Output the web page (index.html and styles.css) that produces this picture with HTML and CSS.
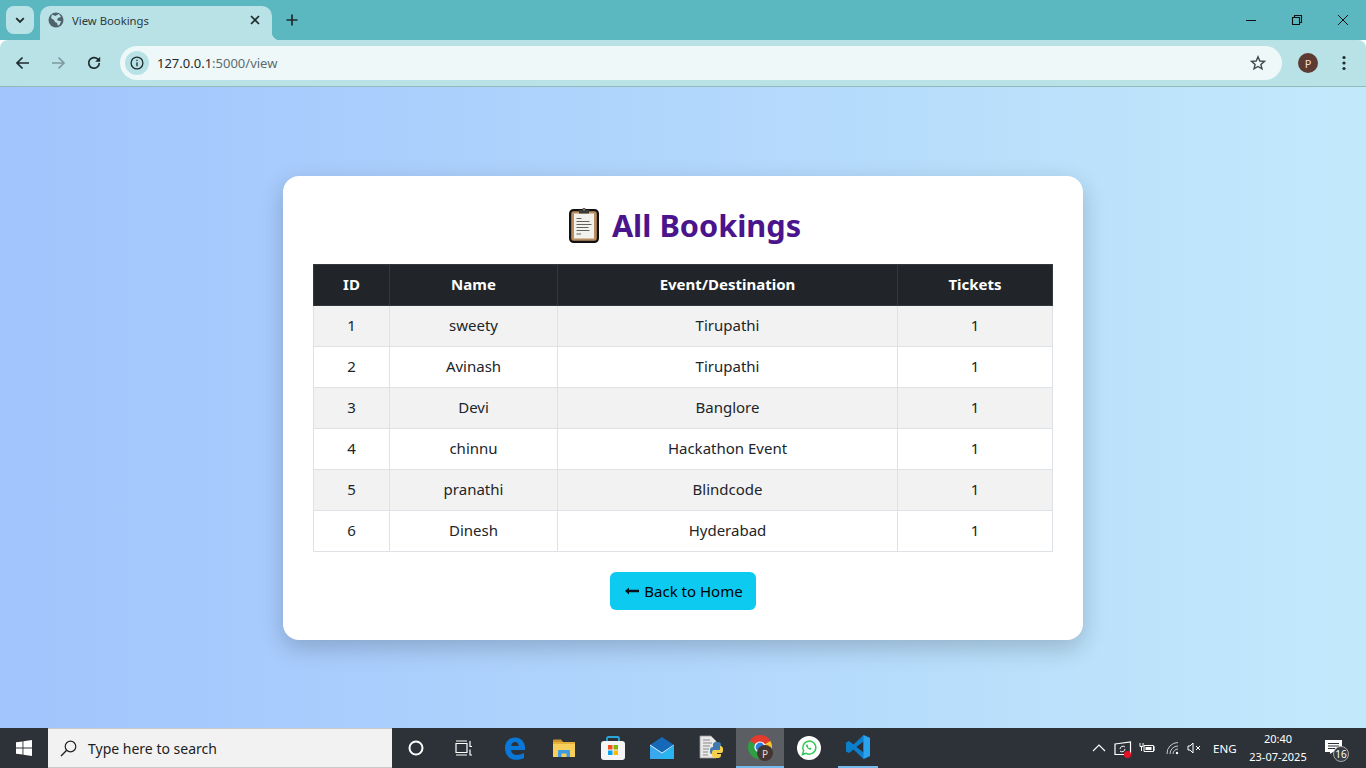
FILE: index.html
```html
<!DOCTYPE html>
<html lang="en">
<head>
    <meta charset="UTF-8">
    <meta name="viewport" content="width=device-width, initial-scale=1.0">
    <title>View Bookings</title>
    <link rel="stylesheet" href="styles.css">
</head>
<body>
    <!-- browser chrome -->
    <div class="tabstrip">
        <div class="tab-search">
            <svg width="12" height="12" viewBox="0 0 12 12"><path d="M2.200 4.200 6 8l3.800-3.800" fill="none" stroke="#1f2a2c" stroke-width="1.800"/></svg>
        </div>
        <div class="tab">
            <svg class="favicon" width="16" height="16" viewBox="0 0 16 16"><circle cx="8" cy="8" r="7.500" fill="#51636a"/><path d="M4 2.600 7.400 4 9 3l2-1 2 3-3 1-1 2 2 1 2 0-1 3-2 2-1-3-2-1-1-2-3-2z" fill="#b9e2e6"/></svg>
            <span class="tab-title">View Bookings</span>
            <svg class="tab-close" width="10" height="10" viewBox="0 0 10 10"><path d="M1 1l8 8M9 1l-8 8" stroke="#1f2a2c" stroke-width="1.700"/></svg>
        </div>
        <svg class="new-tab" width="12" height="12" viewBox="0 0 12 12"><path d="M6 .5v11M.5 6h11" stroke="#1f2a2c" stroke-width="1.700"/></svg>
        <div class="win-controls">
            <svg width="46" height="12" viewBox="0 0 46 12"><path d="M18 6.500h10" stroke="#111" stroke-width="1"/></svg>
            <svg width="46" height="12" viewBox="0 0 46 12"><path d="M18.500 3.500h7v7h-7zM20.500 3.500v-2h7v7h-2" fill="none" stroke="#111" stroke-width="1.100"/></svg>
            <svg width="46" height="12" viewBox="0 0 46 12"><path d="M18 1l10 10M28 1 18 11" stroke="#111" stroke-width="1"/></svg>
        </div>
    </div>
    <div class="toolbar">
        <svg class="nav-btn" width="16" height="16" viewBox="0 0 16 16"><path d="M14 8H2.500M7.500 2.500 2 8l5.500 5.500" fill="none" stroke="#1f2a2c" stroke-width="1.700"/></svg>
        <svg class="nav-btn" width="16" height="16" viewBox="0 0 16 16"><path d="M2 8h11.500M8.500 2.500 14 8l-5.500 5.500" fill="none" stroke="#7f9a9e" stroke-width="1.700"/></svg>
        <svg class="nav-btn" width="16" height="16" viewBox="0 0 16 16"><path d="M13.300 8A5.300 5.300 0 1 1 11.800 4.200L13.500 6" fill="none" stroke="#1f2a2c" stroke-width="1.700"/><path d="M14.200 1.800v5h-5z" fill="#1f2a2c"/></svg>
        <div class="omnibox">
            <span class="site-info">
                <svg width="14" height="14" viewBox="0 0 14 14"><circle cx="7" cy="7" r="5.900" fill="none" stroke="#1f2a2c" stroke-width="1.300"/><path d="M7 6.200v4M7 3.800v1.300" stroke="#1f2a2c" stroke-width="1.300"/></svg>
            </span>
            <span class="url">127.0.0.1<span class="url-path">:5000/view</span></span>
            <svg class="star" width="16" height="16" viewBox="0 0 16 16"><path d="M8 1.800 9.800 6l4.600.4-3.500 3 1.100 4.500L8 11.500l-4 2.400 1.100-4.500-3.500-3L6.200 6z" fill="none" stroke="#3c4a4d" stroke-width="1.400"/></svg>
        </div>
        <span class="avatar">P</span>
        <svg class="menu-dots" width="4" height="16" viewBox="0 0 4 16"><circle cx="2" cy="2.500" r="1.600" fill="#1f2a2c"/><circle cx="2" cy="8" r="1.600" fill="#1f2a2c"/><circle cx="2" cy="13.500" r="1.600" fill="#1f2a2c"/></svg>
    </div>

    <main class="page">
        <div class="card">
            <h2 class="heading">
                <svg class="clipboard" width="30" height="36" viewBox="0 0 30 36">
                    <rect x="1.100" y="3.100" width="27.800" height="31.800" rx="3.500" fill="#b98d60" stroke="#111" stroke-width="2.200"/>
                    <rect x="5" y="6.500" width="20" height="25" fill="#f2f1ec"/>
                    <path d="M10 6.500V3h3a2 2 0 0 1 4 0h3v3.500z" fill="#3a3a3a"/>
                    <circle cx="15" cy="2.800" r=".8" fill="#c9a27a"/>
                    <path d="M7.500 11.500h5M7.500 14.500h13M7.500 17.500h15M7.500 20.500h12M7.500 23.500h13M7.500 27h4.500" stroke="#606365" stroke-width="1.200"/>
                </svg>
                <span>All Bookings</span>
            </h2>
            <table class="bookings">
                <colgroup>
                    <col class="col-id"><col class="col-name"><col class="col-event"><col class="col-tickets">
                </colgroup>
                <thead>
                    <tr><th>ID</th><th>Name</th><th>Event/Destination</th><th>Tickets</th></tr>
                </thead>
                <tbody>
                    <tr><td>1</td><td>sweety</td><td>Tirupathi</td><td>1</td></tr>
                    <tr><td>2</td><td>Avinash</td><td>Tirupathi</td><td>1</td></tr>
                    <tr><td>3</td><td>Devi</td><td>Banglore</td><td>1</td></tr>
                    <tr><td>4</td><td>chinnu</td><td>Hackathon Event</td><td>1</td></tr>
                    <tr><td>5</td><td>pranathi</td><td>Blindcode</td><td>1</td></tr>
                    <tr><td>6</td><td>Dinesh</td><td>Hyderabad</td><td>1</td></tr>
                </tbody>
            </table>
            <a class="back-btn" href="#">
                <svg width="14" height="8" viewBox="0 0 14 8"><path d="M0 4 4 .5v2.300h10v2.400H4v2.300z" fill="#06141a"/></svg>
                <span>Back to Home</span>
            </a>
        </div>
    </main>

    <!-- windows taskbar -->
    <footer class="taskbar">
        <div class="start">
            <svg width="16" height="16" viewBox="0 0 16 16"><path d="M0 2.300 6.500 1.400v6.100H0zM7.400 1.300 16 0v7.500H7.400zM0 8.400h6.500v6.200L0 13.700zM7.400 8.400H16V16l-8.600-1.300z" fill="#fff"/></svg>
        </div>
        <div class="search">
            <svg width="17" height="17" viewBox="0 0 17 17"><circle cx="10.500" cy="6.500" r="5.300" fill="none" stroke="#222" stroke-width="1.200"/><path d="M6.700 10.300 1 16" stroke="#222" stroke-width="1.400"/></svg>
            <span>Type here to search</span>
        </div>
        <div class="task-item">
            <svg width="16" height="16" viewBox="0 0 16 16"><circle cx="8" cy="8" r="6.500" fill="none" stroke="#fff" stroke-width="2"/></svg>
        </div>
        <div class="task-item">
            <svg width="18" height="16" viewBox="0 0 18 16"><path d="M1 3.500h11v9H1zM1 1h11M1 15h11M15 1v5.500h2M15 9.500V15h2" fill="none" stroke="#fff" stroke-width="1.200"/></svg>
        </div>
        <div class="task-item task-first">
            <svg width="22" height="23" viewBox="0 0 22 23"><path d="M1 11C1 4.500 5.500.5 11 .5c6 0 10 4.200 10 10.500v2H7c.3 3.500 3 5 6 5 2.700 0 5-.8 7-2v5c-2 1.100-4.500 1.800-7.800 1.800C5.500 22.800 1 18 1 11zM7.200 9h7.500c0-2.500-1.500-4-3.600-4S7.500 6.500 7.200 9z" fill="#0a78d8"/></svg>
        </div>
        <div class="task-item">
            <svg width="22" height="18" viewBox="0 0 22 18"><path d="M0 1.500A1 1 0 0 1 1 .5h7l2 2.500H0z" fill="#c8952e"/><rect y="3" width="22" height="15" fill="#f7cf5c"/><path d="M0 3h22v2H0z" fill="#e5b13b"/><path d="M5 18v-6a1 1 0 0 1 1-1h10a1 1 0 0 1 1 1v6h-3.500v-3.500h-5V18z" fill="#3e9ce0"/></svg>
        </div>
        <div class="task-item">
            <svg width="24" height="24" viewBox="0 0 24 24"><path d="M6 6V2.500a1.500 1.500 0 0 1 1.500-1.500h9A1.500 1.500 0 0 1 18 2.500V6" fill="none" stroke="#2aa6dc" stroke-width="1.800"/><rect y="5" width="24" height="19" rx="3" fill="#f5f5f5"/><rect x="7" y="9" width="4.500" height="4.500" fill="#f25022"/><rect x="12.500" y="9" width="4.500" height="4.500" fill="#7fba00"/><rect x="7" y="14.500" width="4.500" height="4.500" fill="#00a4ef"/><rect x="12.500" y="14.500" width="4.500" height="4.500" fill="#ffb900"/></svg>
        </div>
        <div class="task-item">
            <svg width="24" height="22" viewBox="0 0 24 22"><path d="M0 8 12 0l12 8v14H0z" fill="#1668b8"/><path d="M0 8l12 8 12-8v14H0z" fill="#3aa8ec"/><path d="M0 8l12 8 12-8" fill="none" stroke="#d9f0fc" stroke-width="1"/><path d="M24 22H8l8-8 8-6z" fill="#27b4f0"/></svg>
        </div>
        <div class="task-item">
            <svg width="24" height="26" viewBox="0 0 24 26"><path d="M1 1h11l5 5v17H1z" fill="#e8e8e8" stroke="#9a9a9a" stroke-width=".8"/><path d="M4 5h7M4 8h9M4 11h7M4 14h6M4 17h5M4 20h5" stroke="#8a8a8a" stroke-width="1"/><path d="M11 15a3 3 0 0 1 3-3V10a3 3 0 0 1 3-3h2a3 3 0 0 1 3 3v5h-6v1h-2v3h-1a2 2 0 0 1-2-2z" fill="#3f79ad"/><path d="M22 11h-1v4h-6a2 2 0 0 0-2 2v3a3 3 0 0 0 3 3h3a3 3 0 0 0 3-3v-1h-4v-1h4a2 2 0 0 0 2-2v-2a3 3 0 0 0-2-3z" fill="#f5d04d"/></svg>
        </div>
        <div class="task-item task-active">
            <svg class="chrome-icon" width="26" height="26" viewBox="0 0 26 26">
                <path d="M12 12 1.600 6A12 12 0 0 1 22.400 6z" fill="#e33b2e"/>
                <path d="M12 12 22.400 6A12 12 0 0 1 12 24z" fill="#fbc02d"/>
                <path d="M12 12 12 24A12 12 0 0 1 1.600 6z" fill="#2f9e44"/>
                <circle cx="12" cy="12" r="5.600" fill="#fff"/><circle cx="12" cy="12" r="4.400" fill="#2f7de1"/>
                <circle cx="17" cy="18" r="8" fill="#43352f"/>
            </svg>
            <span class="chrome-badge">P</span>
        </div>
        <div class="task-item">
            <svg width="24" height="24" viewBox="0 0 24 24"><circle cx="12" cy="12" r="12" fill="#fff"/><path d="M5.500 18.500 6.600 14.700A6.500 6.500 0 1 1 9.200 17.300z" fill="none" stroke="#35c759" stroke-width="1.500"/><path d="M9.500 8.500c-.7.800-.5 2 .8 3.500s2.600 2.100 3.500 1.600l.8-1-1.600-1-.6.600c-.6-.2-1.200-.9-1.500-1.500l.5-.7-.9-1.500z" fill="#35c759"/></svg>
        </div>
        <div class="task-item task-open">
            <svg width="24" height="24" viewBox="0 0 24 24"><path d="M17.500 0 24 3v18l-6.500 3L7.500 14.500 3 18l-3-1.500v-9L3 6l4.500 3.500z" fill="#0b7fcc"/><path d="M17.500 6.500 10.300 12l7.200 5.500z" fill="#2b2f35"/><path d="M17.500 0 24 3v18l-6.500 3z" fill="#2aa3ee"/></svg>
        </div>
        <div class="tray">
            <svg class="tray-chevron" width="14" height="8" viewBox="0 0 14 8"><path d="M1 7l6-6 6 6" fill="none" stroke="#fff" stroke-width="1.200"/></svg>
            <span class="tray-net">
                <svg width="18" height="15" viewBox="0 0 18 15"><path d="M1 3 16.500 1v12.500H1z" fill="none" stroke="#fff" stroke-width="1.200"/><path d="M6 8a3 3 0 0 1 5-2M11 8a3 3 0 0 1-5 2" fill="none" stroke="#fff" stroke-width="1"/></svg>
                <i class="tray-dot"></i>
            </span>
            <svg class="tray-battery" width="16" height="12" viewBox="0 0 16 12"><path d="M5 3.500h9.500v6H5zM14.500 5H16v3h-1.500" fill="none" stroke="#fff"/><rect x="6.500" y="5" width="6" height="3" fill="#fff"/><path d="M1 1v3.500h3V1M2.500 4.500V9" fill="none" stroke="#fff"/></svg>
            <svg class="tray-wifi" width="14" height="14" viewBox="0 0 14 14"><path d="M1 13A11 11 0 0 1 12 1.500M4 13a8 8 0 0 1 8-8M7 13a5 5 0 0 1 5-5" fill="none" stroke="#c9cbcd" stroke-width="1"/><circle cx="11" cy="12" r="1.200" fill="#fff"/></svg>
            <svg class="tray-sound" width="15" height="12" viewBox="0 0 15 12"><path d="M1 4h2l3-3v10L3 8H1zM9 4l4 4M13 4 9 8" fill="none" stroke="#fff"/></svg>
            <span class="tray-lang">ENG</span>
            <span class="tray-clock"><span>20:40</span><span>23-07-2025</span></span>
            <span class="tray-notify">
                <svg width="18" height="14" viewBox="0 0 18 14"><path d="M0 0h17v12H8l-3 2v-2H0z" fill="#fff"/><path d="M3 3.500h11M3 6h11M3 8.500h7" stroke="#2d3238"/></svg>
                <b class="notify-count">16</b>
            </span>
        </div>
    </footer>
</body>
</html>
```

FILE: styles.css
```css
html, body {
    height: 100%;
}
body {
    margin: 0;
    display: flex;
    flex-direction: column;
    overflow: hidden;
    font-family: "Noto Sans", "Open Sans", Arial, sans-serif;
    color: #212529;
}

/* tab strip */
.tabstrip {
    height: 40px;
    flex: none;
    display: flex;
    align-items: flex-start;
    background: #5bb8c1;
}
.tab-search {
    width: 28px;
    height: 28px;
    margin: 6px 6px 0;
    display: flex;
    align-items: center;
    justify-content: center;
    border-radius: 8px;
    background: #b9e2e6;
}
.tab {
    position: relative;
    width: 232px;
    height: 34px;
    margin-top: 6px;
    padding: 0 12px 6px 8px;
    box-sizing: border-box;
    display: flex;
    align-items: center;
    border-radius: 10px 10px 0 0;
    background: #b9e2e6;
}
.tab::after {
    content: "";
    position: absolute;
    right: -8px;
    bottom: 0;
    width: 8px;
    height: 8px;
    background: radial-gradient(circle at 100% 0, transparent 8px, #b9e2e6 8.5px);
}
.tab-title {
    flex: 1;
    margin-left: 8px;
    font-size: 11.300px;
    color: #2c3a3d;
}
.new-tab {
    margin: 14px 0 0 14px;
}
.win-controls {
    margin-left: auto;
    padding-top: 14px;
    display: flex;
}
.win-controls svg {
    display: block;
}

/* toolbar */
.toolbar {
    height: 46px;
    flex: none;
    display: flex;
    align-items: center;
    border-bottom: 1px solid #94b9bb;
    border-radius: 8px 8px 0 0;
    background: #b9e2e6;
}
.nav-btn {
    flex: none;
    margin: 0 6px 0 14px;
}
.nav-btn:first-child {
    margin-left: 15px;
    margin-right: 5px;
}
.omnibox {
    flex: 1;
    height: 34px;
    margin-left: 12px;
    padding: 0 16px 0 5px;
    display: flex;
    align-items: center;
    border-radius: 17px;
    background: #eef8f8;
}
.site-info {
    width: 24px;
    height: 24px;
    display: flex;
    align-items: center;
    justify-content: center;
    border-radius: 50%;
    background: #b9e2e6;
}
.url {
    flex: 1;
    margin-left: 8px;
    font-size: 13px;
    color: #1f2a2c;
}
.url-path {
    color: #5c6b70;
}
.avatar {
    width: 20px;
    height: 20px;
    margin-left: 16px;
    display: flex;
    align-items: center;
    justify-content: center;
    border-radius: 50%;
    background: #5d3a32;
    color: #f3dedb;
    font-size: 11px;
}
.menu-dots {
    margin: 0 20px 0 24px;
}

/* page content */
.page {
    flex: 1;
    display: flex;
    align-items: center;
    justify-content: center;
    background: linear-gradient(to right, #a1c4fd, #c2e9fb);
}
.card {
    width: 800px;
    padding: 30px;
    box-sizing: border-box;
    display: flex;
    flex-direction: column;
    align-items: center;
    border-radius: 16px;
    background: #fff;
    box-shadow: 0 8px 24px rgba(0, 0, 0, 0.2);
}
.heading {
    height: 38px;
    margin: 0 0 20px;
    display: flex;
    align-items: center;
    gap: 13px;
    font-size: 30.700px;
    font-weight: 700;
    color: #4a148c;
}
.clipboard {
    margin-left: 4px;
}
.bookings {
    width: 739px;
    align-self: flex-start;
    table-layout: fixed;
    border-collapse: collapse;
    font-size: 15px;
    text-align: center;
}
.col-id { width: 76px; }
.col-name { width: 168px; }
.col-event { width: 340px; }
.col-tickets { width: 155px; }
.bookings th,
.bookings td {
    height: 41px;
    padding: 0 0 2px;
    box-sizing: border-box;
    border: 1px solid #dee2e6;
}
.bookings th {
    border-color: #32383e;
    background: #212529;
    color: #fff;
    font-weight: 700;
}
.bookings tbody tr:nth-child(odd) td {
    background: #f2f2f2;
}
.back-btn {
    height: 38px;
    margin-top: 20px;
    padding: 0 13px 0 15px;
    display: flex;
    align-items: center;
    gap: 5px;
    border-radius: 6px;
    background: #0dcaf0;
    color: #000;
    font-size: 15px;
    text-decoration: none;
}

/* taskbar */
.taskbar {
    height: 40px;
    flex: none;
    display: flex;
    align-items: stretch;
    background: #2d3238;
    color: #fff;
}
.start {
    width: 48px;
    display: flex;
    align-items: center;
    justify-content: center;
}
.search {
    width: 344px;
    padding-left: 12px;
    box-sizing: border-box;
    display: flex;
    align-items: center;
    gap: 11px;
    border-top: 1px solid #c9c9c9;
    border-bottom: 1px solid #c9c9c9;
    background: #f2f2f2;
    color: #1d1d1d;
    font-size: 14px;
}
.task-item {
    position: relative;
    width: 48px;
    margin-right: 1px;
    display: flex;
    align-items: center;
    justify-content: center;
    box-sizing: border-box;
}
.task-item:nth-child(3) { margin-right: 0; }
.task-first { margin-left: 2px; }
.task-active {
    background: #5b5f63;
    border-bottom: 2px solid #76b9ed;
}
.chrome-icon {
    margin: 2px 0 0 2px;
}
.chrome-badge {
    position: absolute;
    left: 21px;
    top: 19px;
    width: 16px;
    font-size: 10px;
    line-height: 14px;
    text-align: center;
    color: #eadcd6;
}
.task-open {
    width: 40px;
    margin-left: 4px;
    border-bottom: 2px solid #76b9ed;
}
.tray {
    margin-left: auto;
    padding-right: 23px;
    display: flex;
    align-items: center;
}
.tray-chevron { margin-right: 8px; }
.tray-net {
    position: relative;
    display: flex;
    margin-right: 7px;
}
.tray-dot {
    position: absolute;
    right: 1px;
    bottom: -2px;
    width: 7px;
    height: 7px;
    border-radius: 50%;
    background: #e81123;
}
.tray-battery { margin-right: 11px; }
.tray-wifi { margin-right: 7px; }
.tray-sound { margin-right: 11px; }
.tray-lang {
    width: 26px;
    font-size: 11.500px;
}
.tray-clock {
    width: 72px;
    margin: -2px 0 0 3px;
    display: flex;
    flex-direction: column;
    align-items: center;
    gap: 3px;
    font-size: 11px;
    line-height: 15px;
}
.tray-notify {
    position: relative;
    display: flex;
    margin-left: 11px;
    margin-top: -2px;
}
.notify-count {
    position: absolute;
    left: 8px;
    top: 6px;
    width: 16px;
    height: 16px;
    box-sizing: border-box;
    display: flex;
    align-items: center;
    justify-content: center;
    border: 1px solid #aaa;
    border-radius: 50%;
    background: #3a3e43;
    font-size: 10px;
    font-weight: 400;
}
```
